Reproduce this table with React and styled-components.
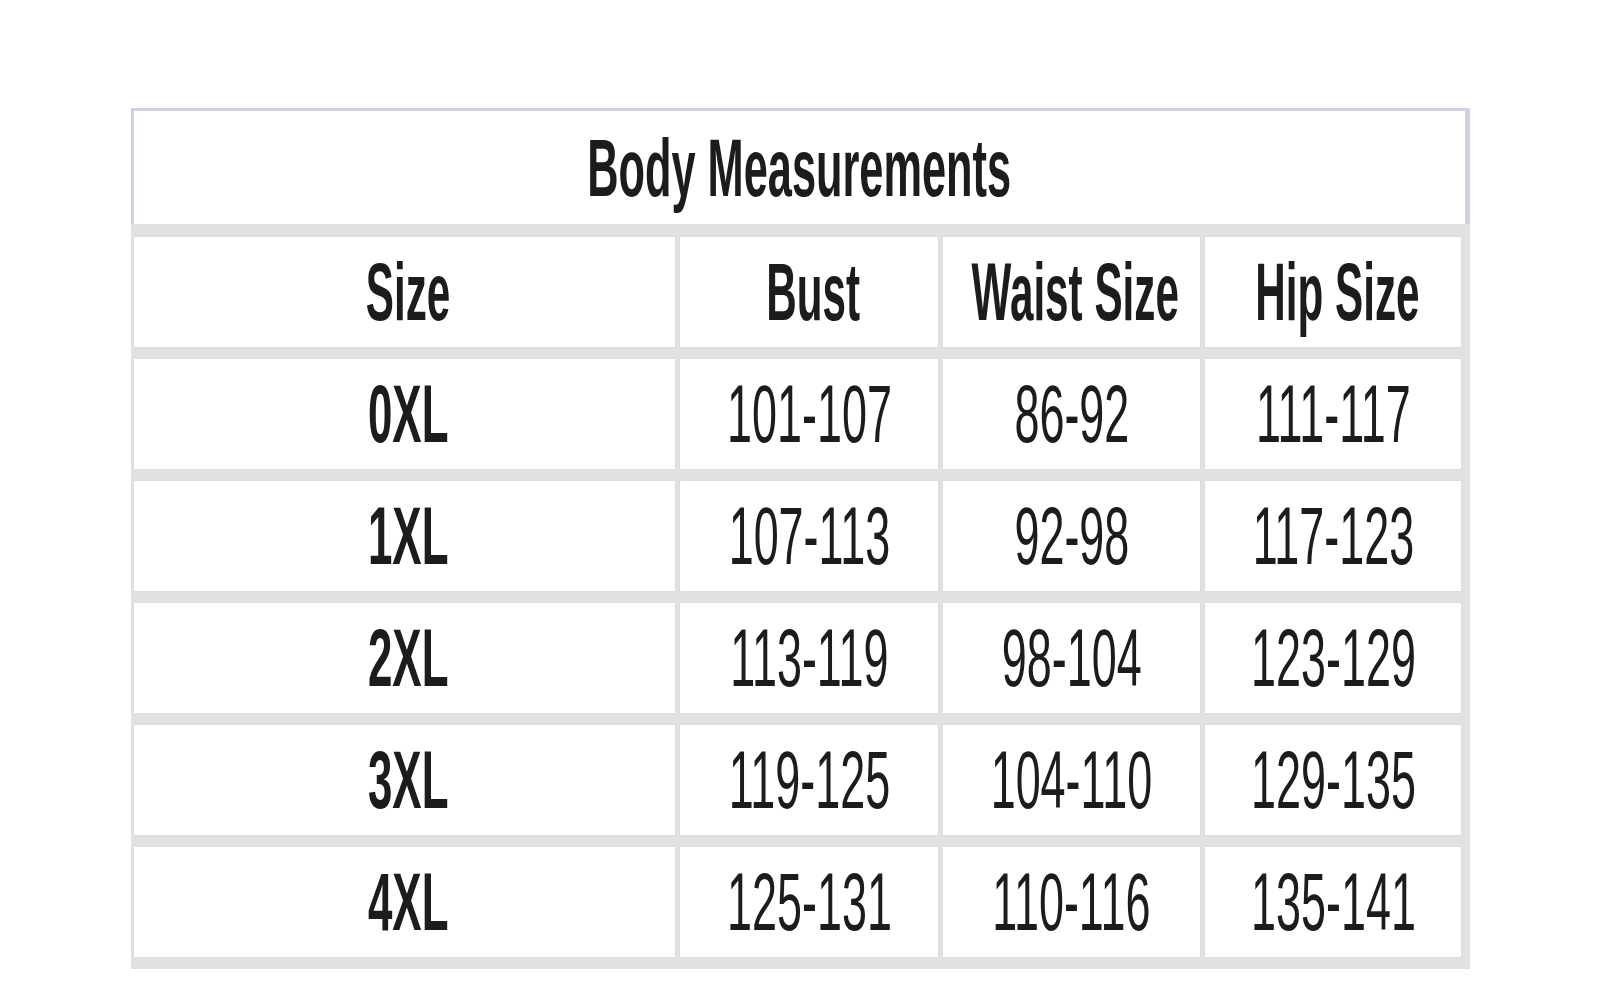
import React from 'react'
import styled, { createGlobalStyle } from 'styled-components'

const GlobalStyle = createGlobalStyle`
  html, body {
    margin: 0;
    padding: 0;
    background: #fff;
  }
  body {
    font-family: "Liberation Sans", Arial, sans-serif;
    color: #1c1c1c;
  }
`

const rows = [
    ['0XL', '101-107', '86-92', '111-117'],
    ['1XL', '107-113', '92-98', '117-123'],
    ['2XL', '113-119', '98-104', '123-129'],
    ['3XL', '119-125', '104-110', '129-135'],
    ['4XL', '125-131', '110-116', '135-141'],
]

const headers = ['Size', 'Bust', 'Waist Size', 'Hip Size']

function App() {
    return (
        <>
            <GlobalStyle />
            <Page>
                <Chart>
                    <TitleBar>
                        <Squeeze bold size={81} scale={0.535}>Body Measurements</Squeeze>
                    </TitleBar>
                    <Grid>
                        {headers.map(h => (
                            <Cell key={h} nudge={8}>
                                <Squeeze bold size={82} scale={0.515}>{h}</Squeeze>
                            </Cell>
                        ))}
                        {rows.map(r => r.map((v, i) => (
                            i === 0 ?
                                <Cell key={r[0] + i} nudge={8}>
                                    <Squeeze bold size={82} scale={0.535}>{v}</Squeeze>
                                </Cell>
                                :
                                <Cell key={r[0] + i}>
                                    <Squeeze size={82} scale={0.548}>{v}</Squeeze>
                                </Cell>
                        )))}
                    </Grid>
                </Chart>
            </Page>
        </>
    )
}

const Page = styled.div`
    width: 1600px;
    height: 1000px;
    padding: 108px 0 0 131px;
    box-sizing: border-box;
    background: #fff;
`

const Chart = styled.div`
    width: 1339px;
    display: flex;
    flex-direction: column;
`

const TitleBar = styled.div`
    height: 116px;
    box-sizing: border-box;
    border: 3px solid #cfd2e4;
    border-right-width: 5px;
    border-bottom: none;
    background: #fff;
    display: flex;
    align-items: center;
    justify-content: center;
    padding-top: 2px;
`

const Grid = styled.div`
    display: grid;
    grid-template-columns: 541px 258px 257px 256px;
    grid-auto-rows: 110px;
    column-gap: 5px;
    row-gap: 12px;
    padding: 13px 8px 12px 3px;
    background: #e1e1e1;
`

const Cell = styled.div`
    background: #fff;
    display: flex;
    align-items: center;
    justify-content: center;
    padding-left: ${p => p.nudge || 0}px;
    box-shadow: 0 0 2px rgba(0, 0, 0, 0.06);
`

const Squeeze = styled.span`
    display: inline-block;
    white-space: nowrap;
    font-size: ${p => p.size}px;
    line-height: 1;
    font-weight: ${p => p.bold ? 700 : 400};
    transform: scaleX(${p => p.scale});
    transform-origin: center;
    color: #1c1c1c;
`

export default App
